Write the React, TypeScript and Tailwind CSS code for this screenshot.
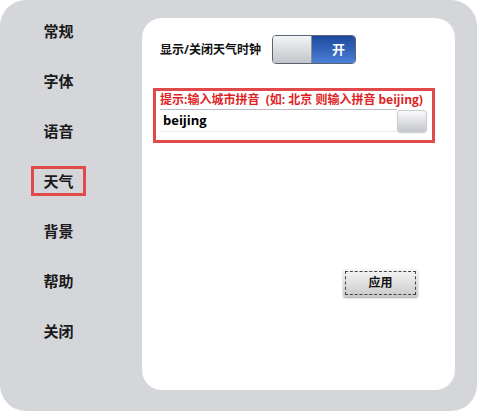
const navItems = ['常规', '字体', '语音', '天气', '背景', '帮助', '关闭'];

const font = { fontFamily: '"Open Sans", "Noto Sans CJK SC", sans-serif' };

function Toggle() {
  return (
    <div className="flex h-[29px] w-[84px] overflow-hidden rounded-[4px] border border-[#5a6473]">
      <div className="w-[39px] border-r border-[#8a919c] bg-gradient-to-b from-[#f4f5f6] to-[#c2c5ca]" />
      <div className="flex flex-1 items-center justify-end bg-gradient-to-b from-[#1d4a9f] to-[#4c7fd6] pr-[10px] text-[13px] font-bold text-white">
        开
      </div>
    </div>
  );
}

export default function App() {
  return (
    <div className="h-[411px] w-[478px] bg-white" style={font}>
      <div className="flex h-[411px] w-[477px] rounded-[26px] bg-[#d4d6da]">
        <div className="flex w-[142px] flex-col gap-[20px] pl-[31px] pt-[16px]">
          {navItems.map(item => (
            <div
              key={item}
              className={`flex h-[30px] w-[55px] items-center justify-center border-[3px] text-[15px] font-bold text-[#1a1a1a] ${
                item === '天气' ? 'border-[#e2494b]' : 'border-transparent'
              }`}
            >
              {item}
            </div>
          ))}
        </div>

        <div className="mt-[18px] flex h-[372px] w-[313px] flex-col rounded-[20px] bg-white">
          <div className="mt-[17px] flex items-center gap-[11px] pl-[18px]">
            <span className="text-[12px] font-bold text-[#111]">显示/关闭天气时钟</span>
            <Toggle />
          </div>

          <div className="ml-[11px] mt-[24px] flex h-[55px] w-[282px] flex-col border-[3px] border-[#e2494b] pl-[4px] pr-[5px]">
            <div className="mt-[1px] whitespace-pre text-[12px] font-bold leading-[16px] text-[#e01f26]">
              提示:输入城市拼音  (如: 北京 则输入拼音 beijing)
            </div>
            <div className="mt-[1px] flex items-center">
              <div className="flex h-[23px] flex-1 items-center border-t border-b border-t-[#b8bcc2] border-b-[#e8eaed] pl-[3px] text-[13px] font-bold text-black">
                beijing
              </div>
              <div className="h-[22px] w-[30px] rounded-[3px] border border-[#c9ccd1] bg-gradient-to-b from-[#fbfbfc] to-[#c4c7cc] shadow-[0_1px_1px_rgba(0,0,0,0.2)]" />
            </div>
          </div>

          <div className="mt-[126px] flex justify-end pr-[37px]">
            <div className="flex h-[28px] w-[75px] items-center justify-center rounded-[2px] bg-gradient-to-b from-[#f7f7f7] to-[#c9c9c9] p-[2px] shadow-[0_1px_2px_rgba(0,0,0,0.35)]">
              <div className="flex h-full w-full items-center justify-center border border-dashed border-[#444] text-[12px] font-bold text-[#111]">
                应用
              </div>
            </div>
          </div>
        </div>
      </div>
    </div>
  );
}
